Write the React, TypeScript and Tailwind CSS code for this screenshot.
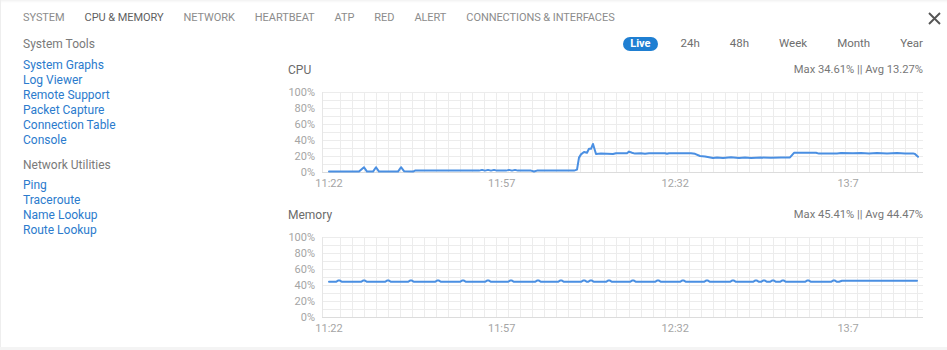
import React from "react";

// CPU & Memory panel: tab strip, utilities sidebar, two live line charts.

const TABS = [
  "SYSTEM",
  "CPU & MEMORY",
  "NETWORK",
  "HEARTBEAT",
  "ATP",
  "RED",
  "ALERT",
  "CONNECTIONS & INTERFACES",
];

const SYSTEM_TOOLS = [
  "System Graphs",
  "Log Viewer",
  "Remote Support",
  "Packet Capture",
  "Connection Table",
  "Console",
];

const NETWORK_UTILS = ["Ping", "Traceroute", "Name Lookup", "Route Lookup"];

const RANGES = ["24h", "48h", "Week", "Month", "Year"];

// chart geometry (svg coords, chart svg starts at page x=287)
const W = 635;
const H = 106;
const PX0 = 34;
const PX1 = 635;
const PY0 = 8; // 100%
const PY1 = 88; // 0%
const OFF = 287;

// [page x, percent]
const CPU: [number, number][] = [
  [328, 0.5], [358, 0.5], [363, 6], [366, 0.5], [372, 0.5], [375, 6], [378, 0.5],
  [397, 0.5], [400, 6], [403, 1], [412, 0.5], [414, 1.8], [478, 1.8], [481, 2.6],
  [484, 1.8], [487, 2.6], [490, 1.8], [493, 2.6], [496, 1.8], [505, 1.8], [508, 2.6],
  [511, 1.8], [514, 2.6], [517, 1.8], [530, 1.8], [533, 0.6], [536, 1.8], [573, 1.8],
  [576, 3], [578, 18], [580, 22], [583, 25], [586, 24], [588, 29], [590, 29],
  [592, 35], [595, 22.5], [600, 23], [612, 22.5], [615, 23.5], [626, 23.5],
  [628, 25.5], [631, 24], [634, 23], [640, 23.5], [644, 22.8], [648, 23.5],
  [664, 23.5], [666, 22.8], [668, 23.5], [690, 23.5], [694, 22.8], [699, 20],
  [704, 19.5], [712, 17.5], [716, 18], [722, 17.5], [730, 18.5], [738, 17.5],
  [744, 18], [750, 17.5], [760, 18], [770, 17.8], [780, 18.3], [789, 18.3],
  [793, 24], [815, 24], [818, 23], [822, 23.3], [836, 23.3], [840, 23.8],
  [852, 23.5], [860, 23.8], [868, 23.3], [876, 23.8], [886, 23.3], [896, 23.8],
  [904, 23.3], [912, 23.3], [914, 22.5], [917, 19],
];

const MEM_BUMPS = [
  338, 363, 387, 410, 437, 462, 487, 510, 537, 560, 583, 590, 608, 632, 657,
  682, 706, 732, 755, 763, 772, 782, 807, 833,
];

function buildMem(): [number, number][] {
  const pts: [number, number][] = [[328, 44]];
  for (const b of MEM_BUMPS) {
    pts.push([b - 3, 44], [b - 1, 45.5], [b + 1, 45.5], [b + 3, 44]);
  }
  pts.push([838, 44], [841, 45.2], [916, 45.2]);
  return pts;
}

const MEM = buildMem();

function toPath(pts: [number, number][]) {
  return pts
    .map(([x, v], i) => {
      const sx = x - OFF;
      const sy = PY1 - (v / 100) * (PY1 - PY0);
      return `${i === 0 ? "M" : "L"}${sx.toFixed(1)} ${sy.toFixed(1)}`;
    })
    .join(" ");
}

function Chart({ data }: { data: [number, number][] }) {
  const hLines = Array.from({ length: 10 }, (_, i) => PY0 + i * 8);
  const vLines = Array.from({ length: 49 }, (_, i) => 52 + (i * 577) / 48);
  const yLabels = [100, 80, 60, 40, 20, 0];
  const xLabels: [string, number][] = [
    ["11:22", 41],
    ["11:57", 213.7],
    ["12:32", 387.3],
    ["13:7", 560],
  ];
  return (
    <svg width={W} height={H} viewBox={`0 0 ${W} ${H}`} className="block">
      {hLines.map((y) => (
        <line key={`h${y}`} x1={PX0} x2={PX1} y1={y + 0.5} y2={y + 0.5} stroke="#ececec" />
      ))}
      {vLines.map((x) => (
        <line
          key={`v${x}`}
          x1={Math.round(x) + 0.5}
          x2={Math.round(x) + 0.5}
          y1={PY0}
          y2={PY1}
          stroke="#ececec"
        />
      ))}
      <line x1={PX0 + 0.5} x2={PX0 + 0.5} y1={PY0} y2={PY1} stroke="#e6e6e6" />
      <line x1={PX0} x2={PX1} y1={PY1 + 0.5} y2={PY1 + 0.5} stroke="#dcdcdc" />
      {yLabels.map((v, i) => (
        <text
          key={v}
          x={27}
          y={PY0 + i * 16 + 4}
          textAnchor="end"
          fontSize={11}
          fill="#a5a5a5"
          fontFamily="Roboto, sans-serif"
        >
          {v}%
        </text>
      ))}
      {xLabels.map(([t, x]) => (
        <text
          key={t}
          x={x}
          y={PY1 + 15}
          textAnchor="middle"
          fontSize={11}
          fill="#a5a5a5"
          fontFamily="Roboto, sans-serif"
        >
          {t}
        </text>
      ))}
      <path
        d={toPath(data)}
        fill="none"
        stroke="#4a8fe2"
        strokeWidth={2}
        strokeLinejoin="round"
        strokeLinecap="round"
      />
    </svg>
  );
}

function Section({
  title,
  stats,
  data,
  className,
}: {
  title: string;
  stats: string;
  data: [number, number][];
  className?: string;
}) {
  return (
    <div className={className}>
      <div className="flex h-4 items-center justify-between text-[#6b6b6b]">
        <span className="text-[12px]">{title}</span>
        <span className="text-[11.2px] text-[#777]">{stats}</span>
      </div>
      <div className="mt-[6px]">
        <Chart data={data} />
      </div>
    </div>
  );
}

export default function App() {
  return (
    <div
      className="h-[350px] w-[947px] overflow-hidden bg-[#f4f4f4]"
      style={{ fontFamily: "Roboto, 'Open Sans', sans-serif" }}
    >
      <div className="relative h-[347px] border-l border-[#eeeeee] bg-white shadow-[inset_0_3px_3px_-2px_rgba(0,0,0,0.07)]">
        {/* tab strip */}
        <div className="flex h-9 items-center pl-[22px] pr-[5px]">
          <nav className="flex gap-5 text-[11px] tracking-[-0.07px]">
            {TABS.map((t) => (
              <span
                key={t}
                className={t === "CPU & MEMORY" ? "text-[#5f5f5f]" : "text-[#8c8c8c]"}
              >
                {t}
              </span>
            ))}
          </nav>
          <button className="ml-auto flex h-4 w-4 items-center justify-center text-[#555]">
            <svg width="13" height="13" viewBox="0 0 13 13">
              <path d="M1 1 L12 12 M12 1 L1 12" stroke="currentColor" strokeWidth="1.9" />
            </svg>
          </button>
        </div>

        <div className="flex">
          {/* utilities sidebar */}
          <aside className="w-[287px] shrink-0 pl-[22px] text-[12px]">
            <div className="h-4 leading-4 text-[#7a7a7a]">System Tools</div>
            <ul className="mt-[6px]">
              {SYSTEM_TOOLS.map((l) => (
                <li key={l} className="h-[15px] leading-[15px] text-[#2b7bcd]">
                  {l}
                </li>
              ))}
            </ul>
            <div className="mt-[9px] h-4 leading-4 text-[#7a7a7a]">Network Utilities</div>
            <ul className="mt-[5px]">
              {NETWORK_UTILS.map((l) => (
                <li key={l} className="h-[15px] leading-[15px] text-[#2b7bcd]">
                  {l}
                </li>
              ))}
            </ul>
          </aside>

          {/* charts */}
          <main className="w-[635px]">
            <div className="flex h-4 items-center justify-end text-[11.5px] text-[#6e6e6e]">
              <span className="flex h-[14px] items-center rounded-full bg-[#1f7fd2] px-[7px] text-[11px] font-bold text-white">
                Live
              </span>
              {RANGES.map((r, i) => (
                <span key={r} className={i === 0 ? "ml-[23px]" : "ml-[30px]"}>
                  {r}
                </span>
              ))}
            </div>
            <Section
              className="mt-[10px]"
              title="CPU"
              stats="Max 34.61% || Avg 13.27%"
              data={CPU}
            />
            <Section
              className="mt-[17px]"
              title="Memory"
              stats="Max 45.41% || Avg 44.47%"
              data={MEM}
            />
          </main>
        </div>
      </div>
    </div>
  );
}
